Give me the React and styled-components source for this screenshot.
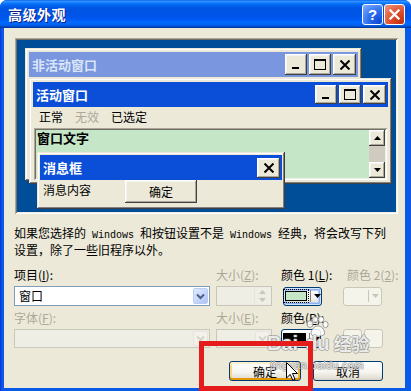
import React from 'react';
import styled, { createGlobalStyle } from 'styled-components';

const CJK = `"Noto Sans CJK SC", "Liberation Sans", sans-serif`;

const GlobalStyle = createGlobalStyle`
  html, body {
    margin: 0;
    padding: 0;
    background: #fff;
  }
  body {
    font-family: ${CJK};
    font-size: 12px;
  }
`;

const Dialog = styled.div`
  position: relative;
  width: 411px;
  height: 391px;
  display: flex;
  flex-direction: column;
  background: linear-gradient(90deg, #0831D9 0px, #0A5AE8 2px, #0A5AE8 100%);
  border-radius: 7px 7px 0 0;
  overflow: hidden;
  font-family: ${CJK};
`;

const TitleBar = styled.div`
  height: 28px;
  flex: none;
  display: flex;
  align-items: center;
  justify-content: space-between;
  padding: 0 6px 0 8px;
  background: linear-gradient(180deg, #0058ee 0%, #3593ff 4%, #288eff 7%, #127dff 10%, #036ffc 14%, #0262ee 20%, #0057e5 28%, #0054e3 34%, #0055eb 60%, #005bf5 70%, #026afe 80%, #0062ef 88%, #0052d6 94%, #0040ab 97%, #003092 100%);
`;

const TitleText = styled.div`
  color: #fff;
  font-weight: bold;
  font-size: 14px;
  line-height: 16px;
  text-shadow: 1px 1px #0a1e8c;
  letter-spacing: 0.5px;
`;

const TitleButtons = styled.div`
  display: flex;
  gap: 1px;
  margin-top: 1px;
`;

const XpCapButton = styled.div`
  width: 21px;
  height: 21px;
  box-sizing: border-box;
  border: 1px solid #fff;
  border-radius: 3px;
  display: flex;
  align-items: center;
  justify-content: center;
  color: #fff;
  font: bold 15px "Liberation Sans", sans-serif;
  background: ${p =>
    p.$danger
      ? 'radial-gradient(circle at 85% 90%, #c2300f 0%, #de4d2d 45%, #f0987e 100%)'
      : 'radial-gradient(circle at 85% 90%, #0f4bd2 0%, #2a6cf0 45%, #86b0fb 100%)'};
`;

const Body = styled.div`
  flex: 1;
  margin: 0 6px 3px 4px;
  padding: 10px 0 0 10px;
  background: #ece9d8;
  display: flex;
  flex-direction: column;
`;

const Preview = styled.div`
  position: relative;
  width: 383px;
  height: 176px;
  margin-left: 1px;
  flex: none;
  background: #004e98;
  box-shadow: inset 1px 1px #aca899, inset -1px -1px #fff, inset 2px 2px #716f64, inset -2px -2px #f1efe2;
`;

const Win = styled.div`
  position: absolute;
  left: ${p => p.$x}px;
  top: ${p => p.$y}px;
  width: ${p => p.$w}px;
  height: ${p => p.$h}px;
  box-sizing: border-box;
  padding: ${p => p.$pad}px;
  background: #ece9d8;
  box-shadow: inset -1px -1px #404040, inset 1px 1px #ece9d8, inset -2px -2px #808080, inset 2px 2px #fff;
  display: flex;
  flex-direction: column;
`;

const Caption = styled.div`
  height: ${p => p.$h}px;
  flex: none;
  display: flex;
  align-items: center;
  justify-content: space-between;
  padding-left: 3px;
  padding-right: 2px;
  background: ${p => (p.$inactive ? '#7a96df' : '#0b4fd9')};
`;

const CaptionText = styled.div`
  color: ${p => (p.$inactive ? '#d8e4f8' : '#fff')};
  font-weight: bold;
  font-size: 13px;
  line-height: 16px;
`;

const CapButtons = styled.div`
  display: flex;
  gap: 2px;
`;

const CapBtn = styled.div`
  width: ${p => p.$w}px;
  height: ${p => p.$h}px;
  box-sizing: border-box;
  background: #ece9d8;
  box-shadow: inset -1px -1px #404040, inset 1px 1px #fff, inset -2px -2px #aca899, inset 2px 2px #f5f4ee;
  display: flex;
  align-items: center;
  justify-content: center;
`;

const MenuBar = styled.div`
  height: 20px;
  flex: none;
  display: flex;
  align-items: center;
`;

const MenuItem = styled.div`
  padding: 0 6px;
  font-size: 12px;
  line-height: 14px;
  color: ${p => (p.$disabled ? '#aca899' : '#000')};
`;

const ClientArea = styled.div`
  flex: 1;
  margin: 1px 1px 0 1px;
  padding: 2px;
  display: flex;
  background: #c5e6c7;
  box-shadow: inset 1px 1px #aca899, inset -1px -1px #fff, inset 2px 2px #716f64, inset -2px -2px #f1efe2;
`;

const ClientText = styled.div`
  flex: 1;
  font-weight: bold;
  font-size: 13px;
  line-height: 16px;
  padding-left: 1px;
`;

const ScrollBar = styled.div`
  width: 16px;
  display: flex;
  flex-direction: column;
  justify-content: space-between;
  background: #cfcbc0;
`;

const MsgBody = styled.div`
  flex: 1;
  display: flex;
  align-items: flex-start;
`;

const MsgText = styled.div`
  font-size: 12px;
  line-height: 14px;
  padding: 3px 0 0 3px;
  width: 82px;
`;

const ClassicButton = styled.div`
  width: 72px;
  height: 23px;
  box-sizing: border-box;
  display: flex;
  align-items: center;
  justify-content: center;
  font-size: 12px;
  background: #ece9d8;
  box-shadow: inset -1px -1px #404040, inset 1px 1px #fff, inset -2px -2px #aca899, inset 2px 2px #f5f4ee;
`;

const Description = styled.div`
  margin-top: 12px;
  font-size: 12px;
  line-height: 14px;
`;

const DescLine = styled.div`
  white-space: nowrap;
`;

const Latin = styled.span`
  font-family: "Liberation Mono", monospace;
  font-size: 10px;
  white-space: pre;
`;

const FormRow = styled.div`
  display: grid;
  grid-template-columns: 202px 65px 62px 40px;
  align-items: center;
  margin-top: ${p => p.$gap}px;
  height: ${p => p.$h}px;
`;

const Label = styled.div`
  font-size: 12px;
  line-height: 14px;
  white-space: nowrap;
  color: ${p => (p.$disabled ? '#aca899' : '#000')};
  margin-left: ${p => p.$indent || 0}px;
`;

const Combo = styled.div`
  width: ${p => p.$w}px;
  height: ${p => p.$h}px;
  box-sizing: border-box;
  border: 1px solid ${p => (p.$disabled ? '#c9c7ba' : '#7f9db9')};
  background: ${p => (p.$disabled ? '#efeee5' : '#fff')};
  display: flex;
  align-items: stretch;
  padding: 1px;
`;

const ComboText = styled.div`
  flex: 1;
  padding-left: 3px;
  font-size: 12px;
  line-height: 16px;
`;

const ComboArrow = styled.div`
  width: 15px;
  box-sizing: border-box;
  border-radius: 2px;
  border: 1px solid ${p => (p.$disabled ? '#e6e4dc' : '#b9cdf6')};
  background: ${p =>
    p.$disabled ? '#f2f1ea' : 'linear-gradient(135deg, #e2ebfe 0%, #c5d6fb 55%, #aec4f4 100%)'};
  display: flex;
  align-items: center;
  justify-content: center;
`;

const SpinArrows = styled.div`
  width: 15px;
  display: flex;
  flex-direction: column;
  border-left: 1px solid #e6e4dc;
`;

const SpinHalf = styled.div`
  flex: 1;
  display: flex;
  align-items: center;
  justify-content: center;
`;

const XpButton = styled.div`
  box-sizing: border-box;
  width: ${p => p.$w}px;
  height: ${p => p.$h}px;
  margin-left: ${p => p.$ml || 0}px;
  border: 1px solid ${p => (p.$disabled ? '#c9c7ba' : '#003c74')};
  border-radius: 3px;
  background: ${p =>
    p.$disabled ? '#f5f4ea' : 'linear-gradient(180deg, #ffffff 0%, #f6f5f0 55%, #e3e0d6 88%, #d6d0c5 100%)'};
  box-shadow: ${p =>
    p.$focus
      ? 'inset 0 0 0 1px #cee7ff, inset 0 0 0 2px #8cb0ee, inset 0 0 0 3px #b8cff5'
      : p.$hover
      ? 'inset 0 2px #fff0cf, inset 0 -2px #e59700, inset 2px 0 #fbd784, inset -2px 0 #f0b42e'
      : 'none'};
  display: flex;
  align-items: center;
  justify-content: center;
  gap: 3px;
  font-size: 12px;
  color: ${p => (p.$disabled ? '#aca899' : '#000')};
`;

const Swatch = styled.div`
  width: ${p => p.$w}px;
  height: ${p => p.$h}px;
  box-sizing: border-box;
  border: 1px solid #000;
  background: ${p => p.$color};
  outline: ${p => (p.$focus ? '1px dotted #000' : 'none')};
  outline-offset: 1px;
`;

const Blank = styled.div`
  width: ${p => p.$w}px;
`;

const Divider = styled.div`
  width: 1px;
  height: 12px;
  background: ${p => (p.$disabled ? '#c9c7ba' : '#808080')};
`;

const ButtonPair = styled.div`
  display: flex;
  gap: 2px;
`;

const ActionRow = styled.div`
  width: 369px;
  margin-top: 13px;
  display: flex;
  justify-content: flex-end;
  gap: 12px;
`;

const Watermark = styled.div`
  position: absolute;
  left: 267px;
  top: 316px;
  color: rgba(255, 255, 255, 0.85);
  text-shadow: -1px 0 rgba(110, 110, 110, 0.45), 1px 0 rgba(110, 110, 110, 0.45),
    0 -1px rgba(110, 110, 110, 0.45), 0 1px rgba(110, 110, 110, 0.45);
  white-space: nowrap;
  pointer-events: none;
`;

const WatermarkMain = styled.div`
  display: flex;
  align-items: flex-end;
  font: bold 20px "Liberation Sans", sans-serif;
  line-height: 18px;
`;

const DuStack = styled.div`
  display: flex;
  flex-direction: column;
  align-items: center;
  margin-left: 7px;
`;

const WatermarkCjk = styled.span`
  font-family: ${CJK};
  font-size: 18px;
  margin-left: 4px;
`;

const WatermarkSub = styled.div`
  margin: 8px 0 0 3px;
  font: 11px "Liberation Sans", sans-serif;
  line-height: 11px;
  letter-spacing: 0.3px;
  color: rgba(255, 255, 255, 0.7);
`;

const HighlightBox = styled.div`
  position: absolute;
  left: 199px;
  top: 341px;
  width: 114px;
  height: 50px;
  box-sizing: border-box;
  border: 5px solid #e51c1c;
  pointer-events: none;
`;

const Pointer = styled.svg`
  position: absolute;
  left: 286px;
  top: 362px;
`;

const Minimize = () => (
  <svg width="12" height="11" viewBox="0 0 12 11">
    <rect x="2" y="8" width="7" height="2" fill="#000" />
  </svg>
);

const Maximize = () => (
  <svg width="12" height="11" viewBox="0 0 12 11">
    <rect x="0.5" y="0.5" width="11" height="10" fill="none" stroke="#000" />
    <rect x="0" y="0" width="12" height="2" fill="#000" />
  </svg>
);

const CloseX = ({ color = '#000', size = 12 }) => (
  <svg width={size} height={size - 2} viewBox="0 0 12 10">
    <path d="M1.5 0.5 L10.5 9.5 M10.5 0.5 L1.5 9.5" stroke={color} strokeWidth="2" />
  </svg>
);

const Chevron = ({ color }) => (
  <svg width="9" height="7" viewBox="0 0 9 7">
    <path d="M1 1.5 L4.5 5 L8 1.5" fill="none" stroke={color} strokeWidth="2" />
  </svg>
);

const Tri = ({ up, color = '#000' }) => (
  <svg width="7" height="4" viewBox="0 0 7 4">
    <path d={up ? 'M3.5 0 L7 4 L0 4 Z' : 'M0 0 L7 0 L3.5 4 Z'} fill={color} />
  </svg>
);

const Paw = () => (
  <svg width="23" height="21" viewBox="0 0 23 21" style={{ marginBottom: -3 }}>
    <g fill="rgba(255,255,255,0.85)" stroke="rgba(100,100,100,0.6)" strokeWidth="1">
      <ellipse cx="4" cy="8" rx="3" ry="3.4" />
      <ellipse cx="9" cy="3.5" rx="2.8" ry="3" />
      <ellipse cx="15" cy="3.5" rx="2.8" ry="3" />
      <ellipse cx="19.5" cy="8.5" rx="2.6" ry="3.2" />
      <path d="M5 18 C5 13 9 10 12 10 C15 10 19 13 18.5 18 C17.5 21 6 21 5 18 Z" />
    </g>
  </svg>
);

const App = () => (
  <>
    <GlobalStyle />
    <Dialog>
      <TitleBar>
        <TitleText>高级外观</TitleText>
        <TitleButtons>
          <XpCapButton>?</XpCapButton>
          <XpCapButton $danger>
            <CloseX color="#fff" size={13} />
          </XpCapButton>
        </TitleButtons>
      </TitleBar>

      <Body>
        <Preview>
          <Win $x={10} $y={10} $w={337} $h={133} $pad={4}>
            <Caption $inactive $h={25}>
              <CaptionText $inactive>非活动窗口</CaptionText>
              <CapButtons>
                <CapBtn $w={22} $h={21}><Minimize /></CapBtn>
                <CapBtn $w={22} $h={21}><Maximize /></CapBtn>
                <CapBtn $w={23} $h={21}><CloseX /></CapBtn>
              </CapButtons>
            </Caption>
          </Win>

          <Win $x={14} $y={40} $w={363} $h={106} $pad={4}>
            <Caption $h={25}>
              <CaptionText>活动窗口</CaptionText>
              <CapButtons>
                <CapBtn $w={22} $h={19}><Minimize /></CapBtn>
                <CapBtn $w={22} $h={19}><Maximize /></CapBtn>
                <CapBtn $w={23} $h={19}><CloseX /></CapBtn>
              </CapButtons>
            </Caption>
            <MenuBar>
              <MenuItem>正常</MenuItem>
              <MenuItem $disabled>无效</MenuItem>
              <MenuItem>已选定</MenuItem>
            </MenuBar>
            <ClientArea>
              <ClientText>窗口文字</ClientText>
              <ScrollBar>
                <CapBtn $w={16} $h={16}><Tri up /></CapBtn>
                <CapBtn $w={16} $h={16}><Tri /></CapBtn>
              </ScrollBar>
            </ClientArea>
          </Win>

          <Win $x={22} $y={114} $w={248} $h={57} $pad={3}>
            <Caption $h={25}>
              <CaptionText>消息框</CaptionText>
              <CapBtn $w={23} $h={20}><CloseX /></CapBtn>
            </Caption>
            <MsgBody>
              <MsgText>消息内容</MsgText>
              <ClassicButton>确定</ClassicButton>
            </MsgBody>
          </Win>
        </Preview>

        <Description>
          <DescLine>
            如果您选择的<Latin> Windows </Latin>和按钮设置不是<Latin> Windows </Latin>经典，将会改写下列
          </DescLine>
          <DescLine>设置，除了一些旧程序以外。</DescLine>
        </Description>

        <FormRow $gap={11} $h={14}>
          <Label>项目(<u>I</u>):</Label>
          <Label $disabled>大小(<u>Z</u>):</Label>
          <Label>颜色 1(<u>L</u>):</Label>
          <Label $disabled $indent={4}>颜色 2(<u>2</u>):</Label>
        </FormRow>

        <FormRow $gap={4} $h={20}>
          <Combo $w={196} $h={20}>
            <ComboText>窗口</ComboText>
            <ComboArrow><Chevron color="#4d6185" /></ComboArrow>
          </Combo>
          <Combo $w={56} $h={20} $disabled>
            <ComboText />
            <SpinArrows>
              <SpinHalf><Tri up color="#c9c7ba" /></SpinHalf>
              <SpinHalf><Tri color="#c9c7ba" /></SpinHalf>
            </SpinArrows>
          </Combo>
          <XpButton $w={39} $h={19} $ml={2} $focus>
            <Swatch $w={22} $h={10} $color="#c5e6c7" $focus />
            <Divider />
            <Tri />
          </XpButton>
          <XpButton $w={39} $h={19} $disabled>
            <Blank $w={18} />
            <Divider $disabled />
            <Tri color="#c9c7ba" />
          </XpButton>
        </FormRow>

        <FormRow $gap={5} $h={14}>
          <Label $disabled>字体(<u>F</u>):</Label>
          <Label $disabled>大小(<u>E</u>):</Label>
          <Label>颜色(<u>R</u>):</Label>
          <div />
        </FormRow>

        <FormRow $gap={4} $h={19}>
          <Combo $w={196} $h={19} $disabled>
            <ComboText />
            <ComboArrow $disabled><Chevron color="#d6d4ca" /></ComboArrow>
          </Combo>
          <Combo $w={56} $h={19} $disabled>
            <ComboText />
            <ComboArrow $disabled><Chevron color="#d6d4ca" /></ComboArrow>
          </Combo>
          <XpButton $w={40} $h={19}>
            <Swatch $w={23} $h={12} $color="#000" />
            <Divider />
            <Tri />
          </XpButton>
          <ButtonPair>
            <XpButton $w={19} $h={19} $disabled />
            <XpButton $w={19} $h={19} $disabled />
          </ButtonPair>
        </FormRow>

        <ActionRow>
          <XpButton $w={72} $h={20} $hover>确定</XpButton>
          <XpButton $w={70} $h={20}>取消</XpButton>
        </ActionRow>
      </Body>

      <Watermark>
        <WatermarkMain>
          Bai
          <DuStack>
            <Paw />
            du
          </DuStack>
          <WatermarkCjk>经验</WatermarkCjk>
        </WatermarkMain>
        <WatermarkSub>jingyan.baidu.com</WatermarkSub>
      </Watermark>

      <HighlightBox />

      <Pointer width="12" height="19" viewBox="0 0 12 19">
        <path d="M0.5 0.5 L0.5 16 L4.2 12.4 L6.8 18.3 L9 17.3 L6.5 11.5 L11.5 11.5 Z" fill="#fff" stroke="#000" strokeWidth="1" />
      </Pointer>
    </Dialog>
  </>
);

export default App;
